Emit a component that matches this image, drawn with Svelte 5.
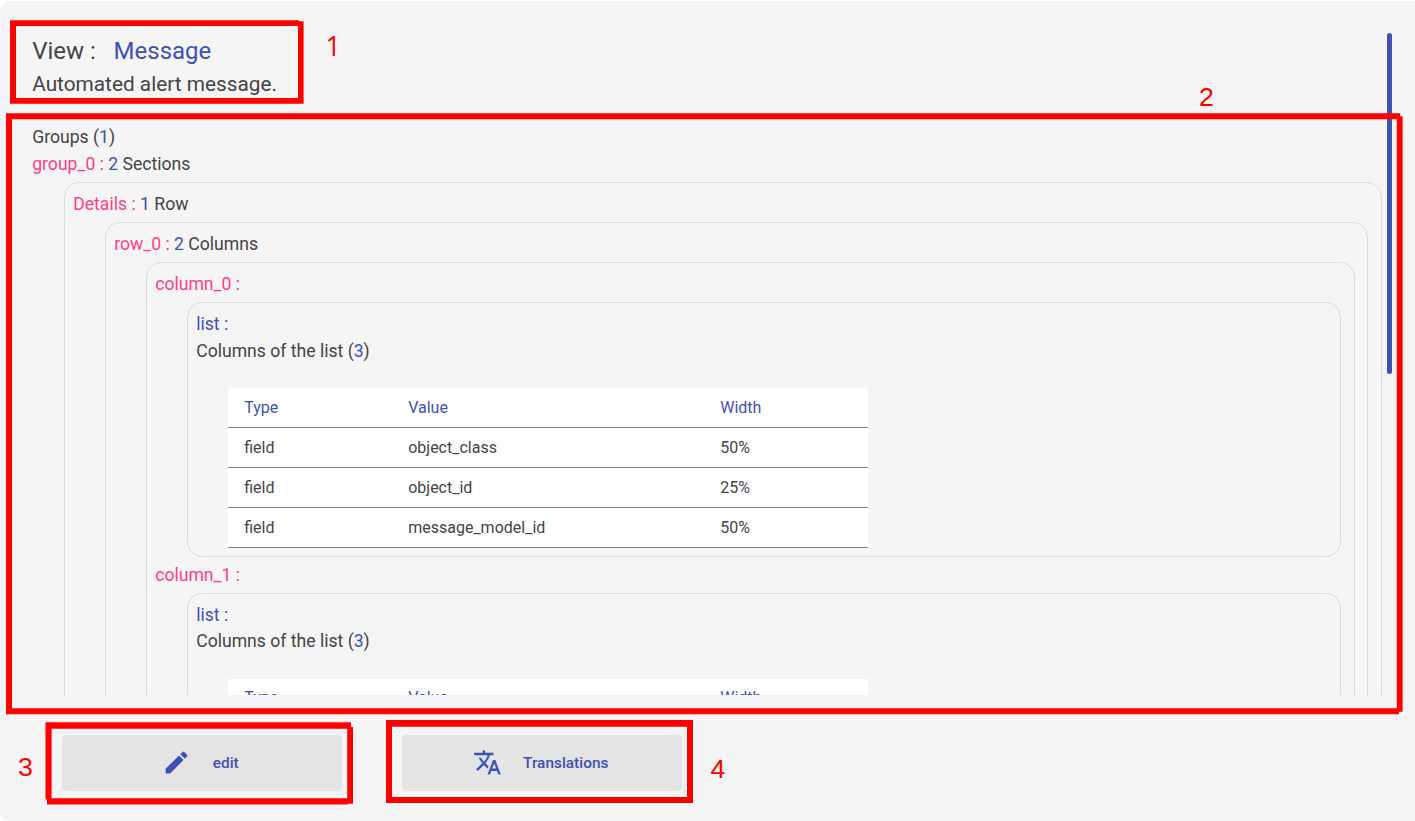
<script>
  const fields = [
    ['field', 'object_class', '50%'],
    ['field', 'object_id', '25%'],
    ['field', 'message_model_id', '50%'],
  ];
  const columns = ['column_0', 'column_1'];
</script>

<main>
  <section class="scroll">
    <h1>View : <span class="blue name">Message</span></h1>
    <p class="sub">Automated alert message.</p>
    <div class="tree">
      <div class="line">Groups (<span class="blue">1</span>)</div>
      <div class="line"><span class="pink">group_0 :</span> <span class="blue">2</span> Sections</div>
      <div class="box">
        <div class="line"><span class="pink">Details :</span> <span class="blue">1</span> Row</div>
        <div class="box">
          <div class="line"><span class="pink">row_0 :</span> <span class="blue">2</span> Columns</div>
          <div class="box">
            {#each columns as column}
              <div class="line pink">{column} :</div>
              <div class="box">
                <div class="line blue">list :</div>
                <div class="line">Columns of the list (<span class="blue">{fields.length}</span>)</div>
                <div class="table">
                  <div class="row head blue"><span>Type</span><span>Value</span><span>Width</span></div>
                  {#each fields as row}
                    <div class="row">{#each row as cell}<span>{cell}</span>{/each}</div>
                  {/each}
                </div>
              </div>
            {/each}
          </div>
        </div>
      </div>
    </div>
    <div class="thumb"></div>
  </section>
  <footer>
    <button>
      <svg viewBox="0 0 24 24"><path d="M3 17.25V21h3.75L17.81 9.94l-3.75-3.75L3 17.25zM20.71 7.04a.996.996 0 0 0 0-1.41l-2.34-2.34a.996.996 0 0 0-1.41 0l-1.83 1.83 3.75 3.75 1.83-1.83z" /></svg>
      <span>edit</span>
    </button>
    <button>
      <svg viewBox="0 0 24 24"><path d="M12.87 15.07l-2.54-2.51.03-.03A17.52 17.52 0 0 0 14.07 6H17V4h-7V2H8v2H1v1.99h11.17C11.5 7.92 10.44 9.75 9 11.35 8.07 10.32 7.3 9.19 6.69 8h-2c.73 1.63 1.73 3.17 2.98 4.56l-5.09 5.02L4 19l5-5 3.11 3.11.76-2.04zM18.5 10h-2L12 22h2l1.12-3h4.75L21 22h2l-4.5-12zm-2.62 7l1.62-4.33L19.12 17h-3.24z" /></svg>
      <span>Translations</span>
    </button>
  </footer>
  <svg class="marks" viewBox="0 0 1415 821">
    <path d="M10 20.3H299V21.3H303.6V103.8H10ZM16 26V98H298V26Z" />
    <path d="M6 113.2H1400V116.3H1402.6V711.7H1399V714.3H6ZM12 119.2V708.2H1396.8V119.2Z" />
    <path d="M45.5 722.2H351V727H353V803.7H348V804.5H47V799.5H45.5ZM51.6 728.8V798.2H347.2V728.8Z" />
    <path d="M386 720.1H693V803.1H386ZM392 726.8V797H687V726.8Z" />
    <text class="plain" x="325.6" y="56">1</text>
    <text x="1199" y="106">2</text>
    <text x="18" y="776">3</text>
    <text x="710.5" y="778">4</text>
  </svg>
</main>

<style>
  :global(body) { background: #fff; overflow: hidden; }
  main {
    position: relative;
    box-sizing: border-box;
    height: 820px;
    margin-top: 1px;
    padding-top: 32px;
    border-radius: 10px 0 0 10px;
    background: #f5f5f5;
    color: #444;
    font-family: Roboto, sans-serif;
  }
  .scroll { position: relative; height: 662px; overflow: hidden; padding: 0 33px 0 32.2px; box-sizing: border-box; }
  h1 { margin: 0; font-size: 24px; line-height: 36px; font-weight: 400; }
  .name { margin-left: 11.8px; }
  .sub { margin: 0; font-size: 20.8px; line-height: 30px; }
  .tree { padding-top: 25.48px; }
  .line { font-size: 17.6px; line-height: 26.4px; white-space: pre; }
  .blue { color: #3f51b5; }
  .pink { color: #ff4081; }
  .box { margin: 4.67px 0 4.67px 32px; padding: 8px; border: 1px solid #dcdcdc; border-radius: 15px; }
  .box .box { margin-right: 4.67px; }
  .table { width: 640px; margin: 24.07px 0 0 32px; background: #fff; font-size: 16px; }
  .row { display: grid; grid-template-columns: 164px 312px 164px; height: 39px; line-height: 39px; border-bottom: 1px solid #808080; }
  .row span { padding-left: 16px; }
  .row.head span { margin-top: -0.25px; }
  .thumb { position: absolute; top: 0; left: 1387px; width: 5px; height: 341px; border-radius: 3px; background: #3f51b5; }
  footer { display: flex; gap: 60px; padding: 40px 0 0 62px; }
  button {
    display: flex;
    align-items: center;
    justify-content: center;
    gap: 21.5px;
    width: 280px;
    height: 56px;
    padding: 0 3px 0 0;
    border: 0;
    border-radius: 4px;
    background: #e4e4e4;
    color: #3f51b5;
    font: 500 15.4px Roboto, sans-serif;
  }
  button svg { width: 29px; height: 29px; margin-bottom: 2px; fill: currentColor; }
  .marks { position: absolute; top: -1px; left: 0; width: 1415px; height: 821px; fill: #f00; pointer-events: none; }
  .marks path { fill-rule: evenodd; }
  .marks text { font: 26.67px "Liberation Sans", Arial, sans-serif; }
  .marks .plain { font-family: "Open Sans", sans-serif; }
</style>
